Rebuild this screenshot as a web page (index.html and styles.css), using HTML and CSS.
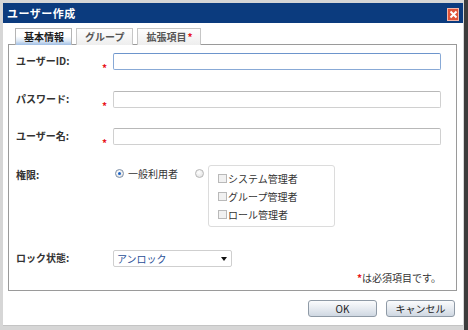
FILE: index.html
```html
<!DOCTYPE html>
<html lang="ja">
<head>
  <meta charset="UTF-8">
  <title>ユーザー作成</title>
  <link rel="stylesheet" href="styles.css">
</head>
<body>

  <div class="window">
    <div class="titlebar">
      <span class="title">ユーザー作成</span>
      <span class="close">
        <svg width="9" height="9" viewBox="0 0 9 9"><path d="M1.5 1.5 L7.5 7.5 M7.5 1.5 L1.5 7.5" stroke="#fff" stroke-width="2"/></svg>
      </span>
    </div>

    <div class="tabs">
      <div class="tab active">基本情報</div>
      <div class="tab">グループ</div>
      <div class="tab">拡張項目<span class="req">*</span></div>
    </div>

    <div class="panel">
      <div class="row">
        <span class="label">ユーザーID:</span>
        <span class="req">*</span>
        <div class="field focus"></div>
      </div>
      <div class="row">
        <span class="label">パスワード:</span>
        <span class="req">*</span>
        <div class="field"></div>
      </div>
      <div class="row">
        <span class="label">ユーザー名:</span>
        <span class="req">*</span>
        <div class="field"></div>
      </div>

      <div class="row role-row">
        <span class="label">権限:</span>
        <span class="req-space"></span>
        <div class="roles">
          <span class="radio checked"></span>
          <span class="radio-text">一般利用者</span>
          <span class="radio"></span>
          <div class="groupbox">
            <div class="check-line"><span class="checkbox"></span>システム管理者</div>
            <div class="check-line"><span class="checkbox"></span>グループ管理者</div>
            <div class="check-line"><span class="checkbox"></span>ロール管理者</div>
          </div>
        </div>
      </div>

      <div class="row lock-row">
        <span class="label">ロック状態:</span>
        <span class="req-space"></span>
        <div class="select">
          <span>アンロック</span>
          <span class="arrow"></span>
        </div>
      </div>

      <div class="note"><span class="req">*</span>は必須項目です。</div>
    </div>

    <div class="footer">
      <button class="btn">OK</button>
      <button class="btn">キャンセル</button>
    </div>
  </div>

</body>
</html>
```

FILE: styles.css
```css
:root {
  --navy: #0b3b7e;
  --line: #9a9a9a;
  --red: #e8141b;
  --text: #222;
}

body {
  margin: 0;
  padding: 3px 0 0 3px;
  height: 330px;
  box-sizing: border-box;
  background: linear-gradient(to right, #d6d6d6 464px, #3c3c3c 464px);
  font-family: "Noto Sans CJK JP", "DejaVu Sans", sans-serif;
  font-size: 10px;
  color: var(--text);
}

.window {
  width: 460px;
  height: 322px;
  background: #fff;
  border-bottom: 1px solid #c4c4c4;
  display: flex;
  flex-direction: column;
}

.titlebar {
  height: 20px;
  background: var(--navy);
  color: #fff;
  display: flex;
  align-items: center;
  justify-content: space-between;
  padding: 0 4px 0 4px;
}

.title {
  font-size: 11px;
  font-weight: bold;
  letter-spacing: 0.5px;
}

.close {
  width: 10px;
  height: 11px;
  margin-top: 3px;
  background: #e0543a;
  border: 1px solid #f3b7a8;
  display: flex;
  align-items: center;
  justify-content: center;
}

.tabs {
  height: 21px;
  display: flex;
  align-items: flex-end;
  gap: 4px;
  padding-left: 12px;
  position: relative;
  z-index: 1;
}

.tab {
  height: 17px;
  box-sizing: border-box;
  padding: 0 8px;
  border: 1px solid #c6c6c6;
  border-bottom: none;
  background: linear-gradient(#fdfdfd, #eeeeee);
  color: #555;
  font-weight: bold;
  line-height: 16px;
  margin-bottom: -1px;
}

.tab.active {
  color: #1c1c1c;
  background: linear-gradient(#ffffff 45%, #dbe7f5 75%, #9fbde3);
  border-color: #b4b4b4;
  padding: 0 7px 0 8px;
}

.tab .req {
  margin-left: 1px;
}

.panel {
  height: 247px;
  box-sizing: border-box;
  margin: 0 6px 0 5px;
  border: 1px solid var(--line);
  padding: 8px 15px 0 7px;
  display: flex;
  flex-direction: column;
}

.row {
  display: flex;
  align-items: center;
  height: 17px;
  margin-bottom: 21px;
}

.row:nth-child(2) {
  margin-bottom: 20px;
}

.label {
  width: 86px;
  font-weight: bold;
  color: #333;
  margin-top: -2px;
}

.req {
  color: var(--red);
  font-weight: bold;
}

.row > .req {
  width: 11px;
  align-self: flex-end;
  line-height: 8px;
  margin-bottom: -2px;
}

.req-space {
  width: 11px;
}

.field {
  width: 328px;
  height: 17px;
  box-sizing: border-box;
  border: 1px solid #d0d0d0;
  border-top-color: #b8b8b8;
  border-radius: 2px;
}

.field.focus {
  border-color: #88a9d6;
  border-top-color: #6d95cc;
}

.role-row {
  height: auto;
  align-items: flex-start;
  margin-top: -1px;
  margin-bottom: 23px;
}

.role-row .label {
  margin-top: 2px;
}

.roles {
  display: flex;
  align-items: flex-start;
}

.radio {
  width: 9px;
  height: 9px;
  margin-top: 4px;
  border-radius: 50%;
  border: 1px solid #b6b6b6;
  background: radial-gradient(circle at 40% 35%, #fff, #dcdcdc);
  box-sizing: border-box;
  position: relative;
}

.radio.checked {
  margin-left: 2px;
  border-color: #7d8fa6;
}

.radio.checked::after {
  content: "";
  position: absolute;
  left: 2px;
  top: 2px;
  width: 3px;
  height: 3px;
  border-radius: 50%;
  background: #1b62c4;
}

.radio-text {
  margin: 1px 17px 0 4px;
  color: #333;
}

.groupbox {
  margin-left: 4px;
  width: 127px;
  box-sizing: border-box;
  padding: 5px 0 5px 9px;
  border: 1px solid #dcdcdc;
  border-radius: 3px;
  display: flex;
  flex-direction: column;
  gap: 4px;
  color: #333;
}

.check-line {
  display: flex;
  align-items: center;
  height: 14px;
}

.checkbox {
  width: 9px;
  height: 9px;
  box-sizing: border-box;
  border: 1px solid #b9b9b9;
  background: #f1f1f1;
  margin-right: 1px;
}

.lock-row {
  margin-bottom: 3px;
}

.select {
  width: 119px;
  height: 17px;
  box-sizing: border-box;
  border: 1px solid #cfcfcf;
  border-radius: 2px;
  padding: 0 4px 0 3px;
  display: flex;
  align-items: center;
  justify-content: space-between;
  color: #2a4f97;
}

.arrow {
  width: 0;
  height: 0;
  border-left: 3px solid transparent;
  border-right: 3px solid transparent;
  border-top: 4px solid #111;
}

.note {
  align-self: flex-end;
  margin-right: 0;
  color: #333;
}

.footer {
  display: flex;
  justify-content: flex-end;
  gap: 9px;
  padding: 9px 8px 0 0;
}

.btn {
  width: 69px;
  height: 17px;
  padding: 0;
  font-family: inherit;
  font-size: 10px;
  color: #222;
  border: 1px solid #8f9aa6;
  border-radius: 3px;
  background: linear-gradient(#fbfcfd, #e4e9ef 55%, #cfd8e2);
}
```
